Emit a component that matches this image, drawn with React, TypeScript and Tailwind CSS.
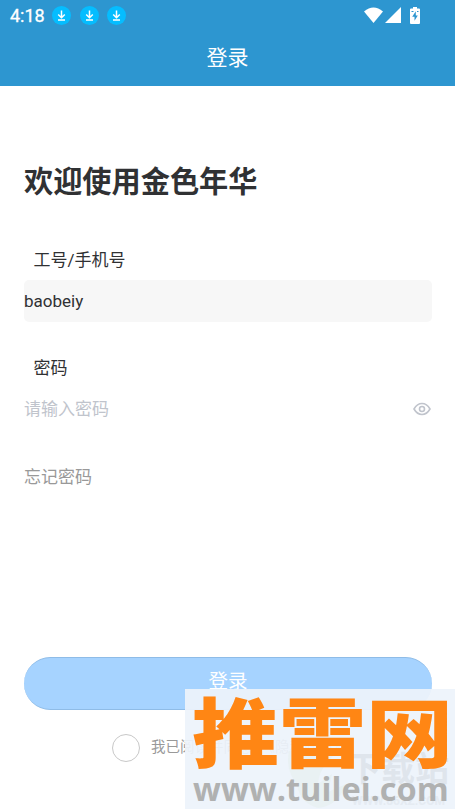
import React from "react";

const downloads = [1, 2, 3];

const DownloadIcon = () => (
  <svg className="h-[19px] w-[19px]" viewBox="0 0 19 19" fill="none">
    <circle cx="9.5" cy="9.5" r="9.5" fill="#05BDFF" />
    <path d="M9.5 4.5v7M6.2 8.5l3.3 3.2 3.3-3.2M6 14h7" stroke="white" strokeWidth="1.5" />
  </svg>
);

const StatusBar = () => (
  <div className="flex h-[30px] items-center pl-[10px] pr-[35px] text-white">
    <span className="w-[42px] whitespace-nowrap pt-px text-[18px] font-normal leading-[30px] [-webkit-text-stroke:0.3px_white] [font-family:Roboto,sans-serif]">
      4:18
    </span>
    <div className="flex gap-[8.500px]">
      {downloads.map((id) => (
        <DownloadIcon key={id} />
      ))}
    </div>
    <div className="ml-auto flex items-center">
      <svg className="h-4 w-[19px]" viewBox="0 0 19 16" fill="white">
        <path d="M0 4.4Q9.5-3.5 19 4.4L9.5 16Z" />
      </svg>
      <svg className="ml-[2px] h-4 w-4" viewBox="0 0 16 16" fill="white">
        <path d="M16 0v16H0Z" />
      </svg>
      <svg className="ml-[9px] h-[17px] w-[10px]" viewBox="0 0 10 17" fill="white">
        <path d="M3 0h4v1.500h2q1 0 1 1V16q0 1-1 1H1q-1 0-1-1V2.500q0-1 1-1h2Z" />
        <path d="M5.8 4.200 2.200 9.800h2.300v4L7.800 8.600H5.800Z" fill="#2D96D0" />
        <path d="M1.500 4.500h2M7 4.500h1.500" stroke="#2D96D0" />
      </svg>
    </div>
  </div>
);

const EyeIcon = () => (
  <svg className="mr-px h-[14px] w-[18px]" viewBox="0 0 18 14" fill="none" stroke="#C0C4CC" strokeWidth="1.6">
    <path d="M1 7Q4.2 1.5 9 1.5T17 7Q13.800 12.500 9 12.500T1 7Z" />
    <circle cx="9" cy="7" r="2.500" />
  </svg>
);

const SiteBadge = () => (
  <div className="absolute bottom-0 right-0 h-[120px] w-[270px] overflow-hidden bg-[#EDF3FB]/93">
    <svg className="absolute left-[100px] top-[60px] h-[60px] w-[64px]" viewBox="0 0 64 60" fill="#E9F1F3">
      <path d="M4 2h50Q34 17 33 35l14-10-4 18 18-8Q53 57 33 59 15 54 12 36 0 20 4 2Z" />
    </svg>
    <div className="absolute left-[162px] top-[57px] whitespace-nowrap text-[34px] font-bold leading-[46px] text-[#DFE5EC]">
      下载站
    </div>
    <div className="absolute left-[167px] top-[104px] whitespace-nowrap text-[12px] font-bold leading-[16px] text-[#E5EBF2]">
      WWW.86XZ.COM
    </div>
    <div className="absolute left-[7px] top-[2px] origin-center scale-y-[0.87] whitespace-nowrap text-[87px] font-black leading-[90px] text-[#FF8614]">
      推雷网
    </div>
    <div className="absolute left-[8px] top-[80px] whitespace-nowrap text-[32.600px] font-bold leading-[40px] text-[#B0B1B1] [font-family:'Open_Sans',sans-serif]">
      www.tuilei.com
    </div>
  </div>
);

export default function App() {
  return (
    <main className="relative h-[809px] w-[455px] overflow-hidden bg-white text-[#303133] [font-family:Roboto,'Noto_Sans_CJK_SC',sans-serif]">
      <header className="h-[86px] bg-[#2D96D0]">
        <StatusBar />
        <h1 className="pt-px text-center text-[21px] leading-[54px] text-white">登录</h1>
      </header>

      <form className="px-6" onSubmit={(e) => e.preventDefault()}>
        <h2 className="pt-[75px] text-[29.200px] font-bold leading-[42px]">欢迎使用金色年华</h2>

        <label className="mt-[43px] block pl-[9.500px] text-[17px] leading-[28px]">工号/手机号</label>
        <input
          className="mt-[6px] block h-[42px] w-[408px] rounded-[5px] bg-[#F7F7F7] text-[17px] outline-none"
          defaultValue="baobeiy"
        />

        <label className="mt-[32px] block pl-[9.500px] text-[17px] leading-[28px]">密码</label>
        <div className="mt-[6px] flex h-[42px] w-[408px] items-center">
          <input
            className="min-w-0 flex-1 pt-[2px] text-[17px] outline-none placeholder:text-[#C0C4CC]"
            type="password"
            placeholder="请输入密码"
          />
          <EyeIcon />
        </div>

        <div className="mt-[33px] text-[17px] leading-[28px] text-[#999999]">忘记密码</div>

        <button className="mt-[166px] block h-[53px] w-[408px] rounded-full border border-x-0 border-[#8FBCE7] bg-[#A6D3FF] pb-[3px] text-[19.500px] text-white">
          登录
        </button>

        <div className="ml-[88px] mt-[24px] flex h-7 items-center whitespace-nowrap text-[14.500px] leading-[28px] text-[#999999]">
          <span className="mr-[11px] h-7 w-7 rounded-full border border-[#C8C8C8]" />
          <span>我已阅读并同意</span>
          <span className="ml-[8px]">《隐私政策》</span>
        </div>
      </form>

      <SiteBadge />
    </main>
  );
}
